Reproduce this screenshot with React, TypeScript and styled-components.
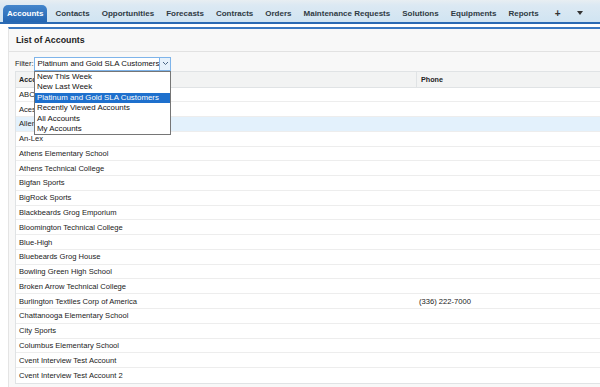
import React from "react";
import styled, { createGlobalStyle, css } from "styled-components";

const GlobalStyle = createGlobalStyle`
  html, body { margin: 0; padding: 0; background: #ffffff; overflow: hidden; }
  body { font-family: "Liberation Sans", Arial, sans-serif; width: 600px; height: 387px; }
  * { box-sizing: border-box; }
`;

const Page = styled.div`
  width: 600px;
  height: 387px;
  display: flex;
  flex-direction: column;
  overflow: hidden;
`;

const TabBar = styled.nav`
  height: 24px;
  flex: none;
  display: flex;
  align-items: flex-end;
  gap: 4px;
  padding-left: 3px;
  background: linear-gradient(#e8eef2 0px, #dce9f3 5px, #d0e4f2 22px);
  border-bottom: 2px solid #2a6ab4;
`;

const Tab = styled.div<{ $active?: boolean }>`
  height: 17px;
  line-height: 17px;
  padding: 0 4px;
  font-size: 8px;
  font-weight: bold;
  color: #2f3a44;
  white-space: nowrap;
  border-radius: 5px 5px 0 0;
  ${(p) =>
    p.$active &&
    css`
      color: #ffffff;
      background: linear-gradient(#4486cc, #2466b2);
    `}
`;

const IconTab = styled(Tab)<{ $ml: number }>`
  margin-left: ${(p) => p.$ml}px;
  font-size: 10px;
  color: #333;
`;

const Caret = styled.span`
  display: inline-block;
  width: 0;
  height: 0;
  border-left: 3px solid transparent;
  border-right: 3px solid transparent;
  border-top: 4px solid #333;
  vertical-align: middle;
  margin-bottom: 2px;
`;

const Gap = styled.div`
  height: 3px;
  flex: none;
  background: #ffffff;
`;

const Panel = styled.section`
  flex: 1;
  margin-left: 8px;
  background: #f8f8f8;
  border-top: 2px solid #3a78c1;
  border-left: 1px solid #e4e4e4;
  display: flex;
  flex-direction: column;
`;

const PanelHeader = styled.h2`
  margin: 0;
  height: 23px;
  flex: none;
  padding-left: 7px;
  display: flex;
  align-items: center;
  font-size: 8.8px;
  font-weight: bold;
  color: #222;
  border-bottom: 1px solid #e2e2e2;
`;

const FilterRow = styled.div`
  flex: none;
  position: relative;
  display: flex;
  align-items: center;
  padding: 4px 0 0 6px;
  height: 19px;
  font-size: 7.4px;
  color: #222;
`;

const FilterLabel = styled.span`
  margin-right: 1px;
`;

const Select = styled.div`
  width: 137px;
  height: 14px;
  display: flex;
  align-items: center;
  background: #fff;
  border: 1px solid #7eb4ea;
  font-size: 7.9px;
  color: #111;
`;

const SelectText = styled.span`
  flex: 1;
  padding-left: 2px;
  white-space: nowrap;
  overflow: hidden;
`;

const SelectButton = styled.span`
  width: 11px;
  height: 100%;
  display: flex;
  align-items: center;
  justify-content: center;
  border-left: 1px solid #7eb4ea;
  background: #e6f1fb;
`;

const Menu = styled.ul`
  position: absolute;
  left: 25px;
  top: 19px;
  width: 137px;
  margin: 0;
  padding: 0;
  list-style: none;
  background: #fff;
  border: 1px solid #767676;
  z-index: 2;
`;

const MenuItem = styled.li<{ $selected?: boolean }>`
  height: 10.4px;
  line-height: 10.4px;
  padding-left: 2px;
  font-size: 7.9px;
  color: #111;
  white-space: nowrap;
  ${(p) =>
    p.$selected &&
    css`
      background: #1e70cd;
      color: #fff;
    `}
`;

const Table = styled.div`
  margin-left: 6px;
  margin-right: -20px;
  border: 1px solid #e0e3e5;
  background: #fff;
  flex: none;
`;

const Row = styled.div<{ $header?: boolean; $hover?: boolean }>`
  display: grid;
  grid-template-columns: 400px 1fr;
  height: ${(p) => (p.$header ? "15.5px" : "14.78px")};
  align-items: center;
  border-bottom: 1px solid #ededed;
  font-size: 7.6px;
  color: #222;
  ${(p) =>
    p.$header &&
    css`
      background: #f2f3f3;
      border-bottom: 1px solid #e0e3e5;
      font-weight: bold;
      font-size: 7.2px;
      color: #222;
    `}
  ${(p) =>
    p.$hover &&
    css`
      background: #e3f1fc;
    `}
  &:last-child {
    border-bottom: none;
  }
`;

const Cell = styled.div<{ $divider?: boolean }>`
  height: 100%;
  display: flex;
  align-items: center;
  padding-left: 3px;
  white-space: nowrap;
  ${(p) =>
    p.$divider &&
    css`
      border-left: 1px solid #e0e3e5;
      padding-left: 4px;
    `}
`;

const tabs = [
  "Accounts",
  "Contacts",
  "Opportunities",
  "Forecasts",
  "Contracts",
  "Orders",
  "Maintenance Requests",
  "Solutions",
  "Equipments",
  "Reports",
];

const options = [
  "New This Week",
  "New Last Week",
  "Platinum and Gold SLA Customers",
  "Recently Viewed Accounts",
  "All Accounts",
  "My Accounts",
];

const accounts: [string, string][] = [
  ["ABC", ""],
  ["Aces", ""],
  ["Allen", ""],
  ["An-Lex", ""],
  ["Athens Elementary School", ""],
  ["Athens Technical College", ""],
  ["Bigfan Sports", ""],
  ["BigRock Sports", ""],
  ["Blackbeards Grog Emporium", ""],
  ["Bloomington Technical College", ""],
  ["Blue-High", ""],
  ["Bluebeards Grog House", ""],
  ["Bowling Green High School", ""],
  ["Broken Arrow Technical College", ""],
  ["Burlington Textiles Corp of America", "(336) 222-7000"],
  ["Chattanooga Elementary School", ""],
  ["City Sports", ""],
  ["Columbus Elementary School", ""],
  ["Cvent Interview Test Account", ""],
  ["Cvent Interview Test Account 2", ""],
];

export default function App() {
  return (
    <Page>
      <GlobalStyle />
      <TabBar>
        {tabs.map((t, i) => (
          <Tab key={t} $active={i === 0}>
            {t}
          </Tab>
        ))}
        <IconTab $ml={4}>+</IconTab>
        <IconTab $ml={4}>
          <Caret />
        </IconTab>
      </TabBar>
      <Gap />
      <Panel>
        <PanelHeader>List of Accounts</PanelHeader>
        <FilterRow>
          <FilterLabel>Filter:</FilterLabel>
          <Select>
            <SelectText>Platinum and Gold SLA Customers</SelectText>
            <SelectButton>
              <svg width="7" height="5" viewBox="0 0 7 5">
                <path d="M1 1 L3.5 3.5 L6 1" fill="none" stroke="#4a6584" strokeWidth="1" />
              </svg>
            </SelectButton>
          </Select>
          <Menu>
            {options.map((o) => (
              <MenuItem key={o} $selected={o.startsWith("Platinum")}>
                {o}
              </MenuItem>
            ))}
          </Menu>
        </FilterRow>
        <Table>
          <Row $header>
            <Cell>Account Name</Cell>
            <Cell $divider>Phone</Cell>
          </Row>
          {accounts.map(([name, phone]) => (
            <Row key={name} $hover={name === "Allen"}>
              <Cell>{name}</Cell>
              <Cell>{phone}</Cell>
            </Row>
          ))}
        </Table>
      </Panel>
    </Page>
  );
}
